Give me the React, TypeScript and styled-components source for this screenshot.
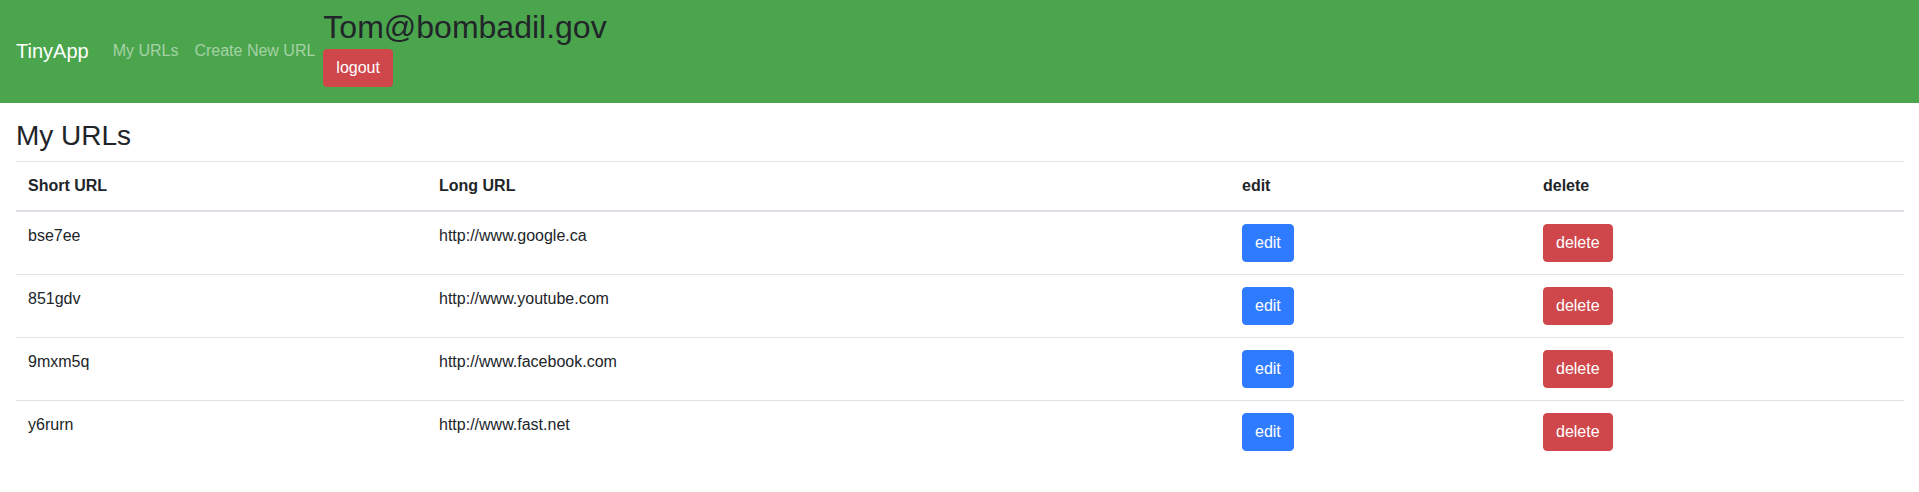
import React from "react";
import styled, { createGlobalStyle } from "styled-components";

const GlobalStyle = createGlobalStyle`
  * { box-sizing: border-box; }
  body {
    margin: 0;
    font-family: "Liberation Sans", Arial, sans-serif;
    font-size: 16px;
    line-height: 1.5;
    color: #212529;
    background: #ffffff;
  }
`;

const Navbar = styled.nav`
  display: flex;
  align-items: center;
  padding: 8px 16px;
  background: #4aa54d;
`;

const Brand = styled.a`
  font-size: 20px;
  line-height: 30px;
  padding: 5px 0;
  margin-right: 16px;
  color: #ffffff;
  text-decoration: none;
  white-space: nowrap;
`;

const NavList = styled.div`
  display: flex;
  align-items: center;
`;

const NavLink = styled.a`
  display: block;
  padding: 8px;
  line-height: 24px;
  color: rgba(255, 255, 255, 0.5);
  text-decoration: none;
  white-space: nowrap;
`;

const UserBlock = styled.div`
  display: flex;
  flex-direction: column;
  align-items: flex-start;
  padding-bottom: 8px;
`;

const Email = styled.h2`
  margin: 0 0 2.6px;
  font-size: 32px;
  font-weight: 400;
  line-height: 1.2;
  color: #212529;
`;

const Button = styled.button<{ $variant: "primary" | "danger" }>`
  display: inline-block;
  font-family: inherit;
  font-size: 16px;
  line-height: 24px;
  padding: 6px 12px;
  border-radius: 4px;
  border: 1px solid ${(p) => (p.$variant === "primary" ? "#2e7bff" : "#cf474b")};
  background: ${(p) => (p.$variant === "primary" ? "#2e7bff" : "#cf474b")};
  color: #ffffff;
  cursor: pointer;
`;

const Main = styled.main`
  padding: 16px 15px 0 16px;
`;

const Title = styled.h3`
  margin: 0 0 8px;
  font-size: 28px;
  font-weight: 400;
  line-height: 1.2;
`;

const Table = styled.table`
  width: 100%;
  border-collapse: collapse;
  table-layout: fixed;
  color: #212529;
`;

const Th = styled.th`
  text-align: left;
  vertical-align: bottom;
  font-weight: 700;
  padding: 12px;
  border-top: 1px solid #dee2e6;
  border-bottom: 2px solid #dee2e6;
`;

const Td = styled.td`
  vertical-align: top;
  padding: 12px;
  border-top: 1px solid #dee2e6;
`;

const urls = [
  { id: "bse7ee", long: "http://www.google.ca" },
  { id: "851gdv", long: "http://www.youtube.com" },
  { id: "9mxm5q", long: "http://www.facebook.com" },
  { id: "y6rurn", long: "http://www.fast.net" },
];

export default function App() {
  return (
    <>
      <GlobalStyle />
      <Navbar>
        <Brand href="#">TinyApp</Brand>
        <NavList>
          <NavLink href="#">My URLs</NavLink>
          <NavLink href="#">Create New URL</NavLink>
        </NavList>
        <UserBlock>
          <Email>Tom@bombadil.gov</Email>
          <Button $variant="danger">logout</Button>
        </UserBlock>
      </Navbar>
      <Main>
        <Title>My URLs</Title>
        <Table>
          <colgroup>
            <col style={{ width: 411 }} />
            <col style={{ width: 803 }} />
            <col style={{ width: 301 }} />
            <col style={{ width: 373 }} />
          </colgroup>
          <thead>
            <tr>
              <Th>Short URL</Th>
              <Th>Long URL</Th>
              <Th>edit</Th>
              <Th>delete</Th>
            </tr>
          </thead>
          <tbody>
            {urls.map((u) => (
              <tr key={u.id}>
                <Td>{u.id}</Td>
                <Td>{u.long}</Td>
                <Td>
                  <Button $variant="primary">edit</Button>
                </Td>
                <Td>
                  <Button $variant="danger">delete</Button>
                </Td>
              </tr>
            ))}
          </tbody>
        </Table>
      </Main>
    </>
  );
}
